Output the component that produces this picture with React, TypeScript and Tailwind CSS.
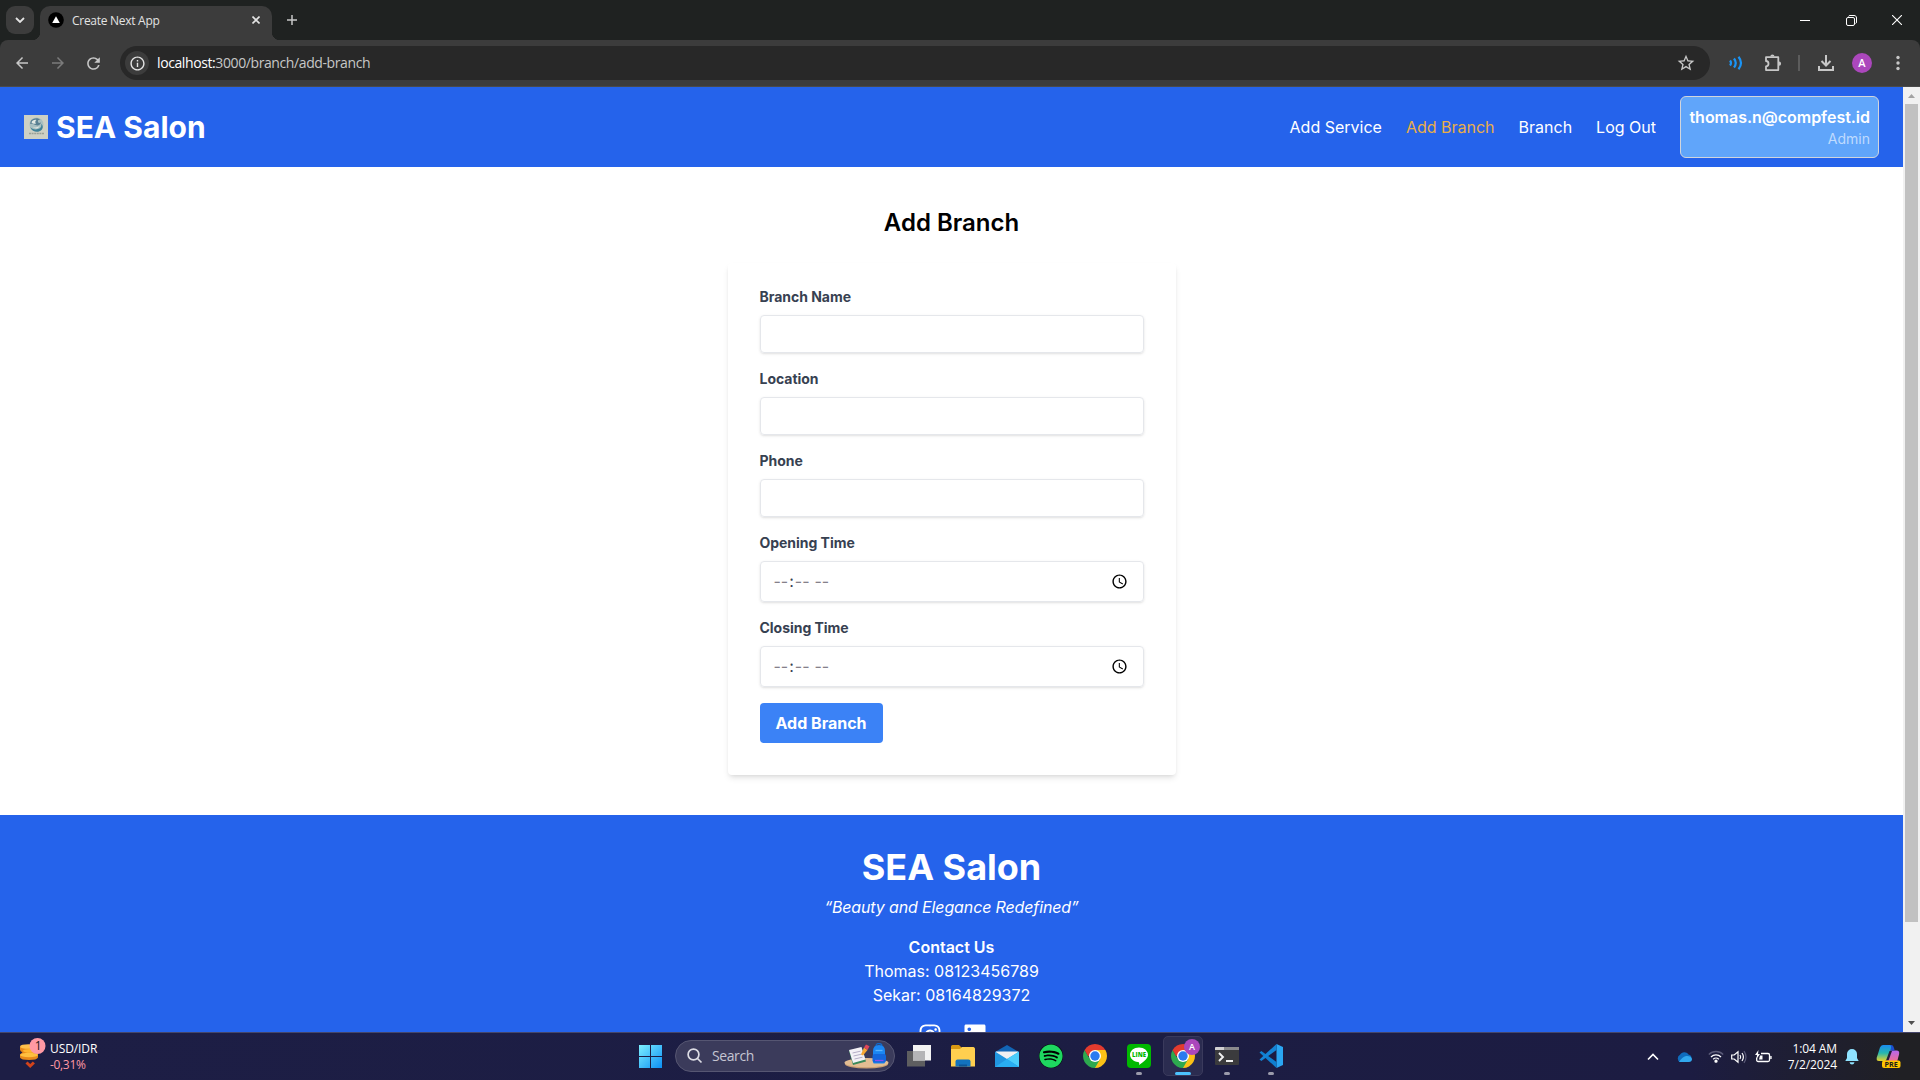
import React from "react";
import { FaInstagram, FaLinkedin, FaSpotify } from "react-icons/fa";
import { MdArrowBack, MdArrowForward, MdInfoOutline, MdRefresh, MdStarBorder } from "react-icons/md";

const UI = "font-['Open_Sans','Noto_Sans',sans-serif]";

function TabStrip() {
  return (
    <div className="flex h-10 items-start bg-[#1f2221]">
      <div className="mt-1.5 ml-1.5 flex size-7 items-center justify-center rounded-[9px] bg-[#3c3c3c]">
        <svg width="10" height="6" viewBox="0 0 10 6" fill="none" stroke="#e3e3e3" strokeWidth="1.8">
          <path d="M1 1l4 4 4-4" />
        </svg>
      </div>
      <div className="-ml-0.5 flex h-10 w-[248px] items-end">
        <div className="size-2 bg-[radial-gradient(circle_at_0_0,#1f2221_8px,#3c3c3c_8.5px)]" />
        <div className="flex h-[34px] w-[232px] items-center rounded-t-[10px] bg-[#3c3c3c] pl-2">
          <svg width="16" height="16" viewBox="0 0 16 16" className="-mt-1.5">
            <circle cx="8" cy="8" r="7.8" fill="#000" />
            <path d="M8 4.3l3.8 6.7H4.2z" fill="#fff" />
          </svg>
          <span className="-mt-1 ml-2 w-[164px] text-[12px] leading-4 tracking-[-0.28px] text-[#e3e3e3]">Create Next App</span>
          <svg width="8" height="8" viewBox="0 0 8 8" className="-mt-1.5 ml-[16px]" stroke="#e3e3e3" strokeWidth="1.6">
            <path d="M.5.5l7 7M7.5.5l-7 7" />
          </svg>
        </div>
        <div className="size-2 bg-[radial-gradient(circle_at_100%_0,#1f2221_8px,#3c3c3c_8.5px)]" />
      </div>
      <svg width="10" height="10" viewBox="0 0 10 10" className="mt-[15px] ml-[7px]" stroke="#c7c7c7" strokeWidth="1.5">
        <path d="M5 0v10M0 5h10" />
      </svg>
      <div className="ml-auto flex h-10 items-center pr-[18px]">
        <svg width="10" height="10" viewBox="0 0 10 10" stroke="#fff">
          <path d="M0 5.5h10" />
        </svg>
        <svg width="11" height="11" viewBox="0 0 11 11" className="ml-9" fill="none" stroke="#fff">
          <rect x=".5" y="2.5" width="8" height="8" rx="1.5" />
          <path d="M2.5 1.5c.2-.7.7-1 1.5-1h4c1.6 0 2.500.9 2.500 2.500v4c0 .8-.3 1.300-1 1.500" />
        </svg>
        <svg width="10" height="10" viewBox="0 0 10 10" className="ml-[35px]" stroke="#fff" strokeWidth="1.1">
          <path d="M0 0l10 10M10 0L0 10" />
        </svg>
      </div>
    </div>
  );
}

function Toolbar() {
  return (
    <div className="h-[47px] bg-[#1f2221]">
      <div className="flex h-[47px] items-center rounded-t-lg border-b border-[#4a4a4a] bg-[#3c3c3c]">
        <MdArrowBack size={18} className="ml-[13px] text-[#c7c7c7]" />
        <MdArrowForward size={18} className="ml-[18px] text-[#7b7b7b]" />
        <MdRefresh size={19} className="ml-[17px] text-[#c7c7c7]" />
        <div className="ml-[17px] flex h-[34px] w-[1590px] items-center rounded-full bg-[#282828] pr-[14px] pl-[5px]">
          <div className="flex size-6 items-center justify-center rounded-full bg-[#3c3c3c]">
            <MdInfoOutline size={17} className="text-[#e3e3e3]" />
          </div>
          <span className="-mt-px ml-2 text-[14px] tracking-[-0.4px] text-[#c7c7c7]">
            <span className="text-white">localhost:</span>3000/branch/add-branch
          </span>
          <MdStarBorder size={20} className="ml-auto text-[#c7c7c7]" />
        </div>
        <svg width="14" height="14" viewBox="0 0 14 14" className="ml-[19px]" fill="none" stroke="#1a94f5" strokeWidth="2.200">
          <path d="M1 4.500q2 2.500 0 5M5 2.500q3.500 4.500 0 9M9.500.8q5 6.200 0 12.400" />
        </svg>
        <svg width="18" height="18" viewBox="0 0 18 18" className="ml-[21px]" fill="none" stroke="#c7c7c7" strokeWidth="1.800">
          <path d="M2 3.200h12.300v12.900H2v-3.700c1.600-.1 2.500-1.200 2.500-2.700S3.600 7.100 2 7z" strokeLinejoin="round" />
          <path d="M6.300 2.500a2.100 2.100 0 0 1 4.200 0zM15 7.600a2.100 2.100 0 0 1 0 4.200z" fill="#c7c7c7" stroke="none" />
        </svg>
        <div className="ml-[16px] h-4 w-0.5 bg-[#5c5c5c]" />
        <svg width="16" height="16" viewBox="0 0 16 16" className="ml-[18px]" fill="none" stroke="#c7c7c7" strokeWidth="2">
          <path d="M8 0v10M3.500 6l4.500 4.500L12.500 6M1 11v4h14v-4" />
        </svg>
        <div className={`${UI} ml-[18px] flex size-5 items-center justify-center rounded-full bg-[#ab47bc] text-[11px] font-semibold text-white`}>A</div>
        <svg width="4" height="16" viewBox="0 0 4 16" className="ml-6" fill="#c7c7c7">
          <circle cx="2" cy="2.500" r="1.700" />
          <circle cx="2" cy="8" r="1.700" />
          <circle cx="2" cy="13.500" r="1.700" />
        </svg>
      </div>
    </div>
  );
}

function SalonLogo() {
  return (
    <svg width="24" height="24" viewBox="0 0 24 24">
      <rect width="24" height="24" fill="#cdd0c4" />
      <circle cx="12.500" cy="9.500" r="7" fill="#a9bfc1" />
      <path d="M6 12c2 2 5 3 8 2 3-.8 4-3 3-5 2 1 2.500 4 .5 6-3 3-9 2.500-11.500-3z" fill="#3f8197" />
      <path d="M7 5.500c2-2.500 7-3.500 9.500-.5-2-.5-3 .5-2.500 2 .5 1.300 2 1.300 3 .3-.3 2.700-3 3.700-5.500 2.700S8 8.500 6 9z" fill="#587f92" />
      <path d="M7.500 7.500c.5-2 3-3 5-2.500-1.500 1-1.500 2.500-.5 3.500-1.500.5-3.500.2-4.500-1zM9 12c2.500 1 5 .5 6.500-1.200C15 13.500 11.500 14.500 9 12z" fill="#e3e9e4" />
      <path d="M5 18.500h15" stroke="#9aa097" strokeWidth="1.500" strokeDasharray="2 .6" />
    </svg>
  );
}

function Header() {
  return (
    <header className="flex h-20 shrink-0 items-center bg-[#2563eb] px-6 text-white">
      <SalonLogo />
      <span className="ml-2 text-3xl font-bold">SEA Salon</span>
      <nav className="ml-auto flex items-center gap-6">
        <a>Add Service</a>
        <a className="text-[#e9ae48]">Add Branch</a>
        <a>Branch</a>
        <a>Log Out</a>
        <div className="w-[199px] rounded-md border border-gray-300 bg-[#60a5fa] p-2 text-right">
          <p className="font-semibold tracking-[-0.02px]">thomas.n@compfest.id</p>
          <p className="text-sm text-[#bfdbfe]">Admin</p>
        </div>
      </nav>
    </header>
  );
}

function Field({ label, type = "text" }: { label: string; type?: string }) {
  return (
    <div className="mb-4">
      <label className="mb-2 block text-sm font-bold tracking-[-0.03px] text-[#374151]">{label}</label>
      {type === "time" ? (
        <input
          type="time"
          className="block h-[41px] w-full appearance-none rounded border border-[#e5e7eb] px-3 py-2 leading-tight tracking-[0.1px] text-[#374151] shadow-[0_1px_3px_0_rgba(0,0,0,0.1),0_1px_2px_-1px_rgba(0,0,0,0.1)] [&::-webkit-datetime-edit-ampm-field]:text-[#85808a] [&::-webkit-datetime-edit-hour-field]:text-[#85808a] [&::-webkit-datetime-edit-minute-field]:text-[#85808a]"
        />
      ) : (
        <input
          type="text"
          className="block h-[38px] w-full appearance-none rounded border border-[#e5e7eb] px-3 py-2 leading-tight text-[#374151] shadow-[0_1px_3px_0_rgba(0,0,0,0.1),0_1px_2px_-1px_rgba(0,0,0,0.1)]"
        />
      )}
    </div>
  );
}

function Page() {
  return (
    <div className="flex h-[945px] flex-col overflow-hidden bg-white font-['Inter',sans-serif] text-base">
      <Header />
      <main className="flex h-[648px] shrink-0 flex-col items-center pt-10">
        <h1 className="mb-6 text-2xl font-semibold text-black">Add Branch</h1>
        <form className="w-full max-w-md rounded bg-white px-8 pt-6 pb-8 shadow-md">
          <Field label="Branch Name" />
          <Field label="Location" />
          <Field label="Phone" />
          <Field label="Opening Time" type="time" />
          <Field label="Closing Time" type="time" />
          <button type="button" className="block h-10 rounded bg-[#3b82f6] px-4 py-2 font-bold text-white">
            Add Branch
          </button>
        </form>
      </main>
      <footer className="flex shrink-0 flex-col items-center bg-[#2563eb] py-8 text-white">
        <h2 className="mb-2 text-4xl font-bold">SEA Salon</h2>
        <p className="tracking-[-0.13px] italic">“Beauty and Elegance Redefined”</p>
        <p className="mt-4 font-semibold">Contact Us</p>
        <p>Thomas: 08123456789</p>
        <p>Sekar: 08164829372</p>
        <div className="mt-4 ml-px flex gap-[21px]">
          <FaInstagram size={24} />
          <FaLinkedin size={24} />
        </div>
      </footer>
    </div>
  );
}

function Scrollbar() {
  return (
    <div className="flex h-[945px] w-[17px] flex-col items-center bg-[#f1f1f1]">
      <svg width="17" height="17" viewBox="0 0 17 17">
        <path d="M5 11l3.500-4 3.500 4z" fill="#a3a3a3" />
      </svg>
      <div className="h-[818px] w-[13px] bg-[#c1c1c1]" />
      <svg width="17" height="17" viewBox="0 0 17 17" className="mt-auto">
        <path d="M5 6l3.500 4L12 6z" fill="#505050" />
      </svg>
    </div>
  );
}

function ChromeIcon() {
  return (
    <svg width="24" height="24" viewBox="0 0 24 24" className="shrink-0">
      <path d="M12 12L1.610 6A12 12 0 0 1 22.390 6z" fill="#e33b2e" />
      <path d="M12 12V6h10.390A12 12 0 0 1 12 24z" fill="#fbc116" />
      <path d="M12 12l5.200 3L12 24A12 12 0 0 1 1.610 6l5.200 9z" fill="#2da94f" />
      <path d="M1.610 6L12 6v6H5z" fill="#e33b2e" />
      <circle cx="12" cy="12" r="6" fill="#fff" />
      <circle cx="12" cy="12" r="4.700" fill="#2a7bf0" />
    </svg>
  );
}

function TaskCell({ children, open }: { children: React.ReactNode; open?: boolean }) {
  return (
    <div className="flex h-[47px] w-11 flex-col items-center pt-[11px]">
      {children}
      {open && <div className="mt-1 h-[3px] w-1.5 rounded-full bg-[#9b9bab]" />}
    </div>
  );
}

function SearchArt() {
  return (
    <svg width="45" height="26" viewBox="0 0 45 26">
      <ellipse cx="22.500" cy="21" rx="21.500" ry="4.500" fill="#c99e72" />
      <ellipse cx="22.500" cy="19.700" rx="22" ry="4.600" fill="#e3bd93" />
      <path d="M5 8l13-2 4 12.500L9 22z" fill="#3a8a5b" />
      <path d="M5 7l12.500-3 4 12.500L9 20z" fill="#f3f1f6" />
      <path d="M8.500 10l8-1.800M9.500 13l8-1.800M10.500 16l8-1.800" stroke="#b5aec6" />
      <path d="M17 11.500l3-7 3.500 2.500-4.500 5.500z" fill="#f7a733" />
      <path d="M20 4.500l2-3 3.500 1.800-2 3.700z" fill="#e0465a" />
      <path d="M32 3q0-2.500 3-2.500T38 3" fill="none" stroke="#1268c9" strokeWidth="1.300" />
      <path d="M29 8q0-6 6-6t6 6v11q0 1.500-1.500 1.500h-9Q29 20.500 29 19z" fill="#1b86f2" />
      <rect x="28.500" y="11" width="13.500" height="8.500" rx="2" fill="#1466dc" />
      <path d="M31.500 7.500h7" stroke="#59b4ff" strokeWidth="1.300" />
      <path d="M31 17.500h8.500" stroke="#8a4ff0" strokeWidth="1.300" />
    </svg>
  );
}

function Taskbar() {
  return (
    <div className={`${UI} flex h-12 items-start border-t border-[#45466a] bg-[linear-gradient(90deg,#1d1e45_0%,#1c1d43_60%,#1c1c42_88%,#202024_99%)] text-[12px] leading-4 text-white`}>
      <div className="flex w-[639px] pt-[5px] pl-[19px]">
        <svg width="27" height="31" viewBox="0 0 27 31">
          <path d="M1 9v2.500q0 2 2.500 2.800L1 16.500v3q1 2.500 9 2.500t9-2.500v-3.500L17.500 14V9z" fill="#e8891a" />
          <ellipse cx="9.500" cy="8.500" rx="8.500" ry="2.300" fill="#ffc04a" />
          <ellipse cx="11" cy="12.800" rx="7" ry="1.900" fill="#ffb52f" />
          <ellipse cx="10" cy="17" rx="9" ry="2.200" fill="#ffbf3f" />
          <path d="M7.500 24.500l3.700 3.500 3.700-3.500" fill="none" stroke="#d2431a" strokeWidth="3" />
          <circle cx="18.500" cy="8" r="8" fill="#ff99a4" />
          <text x="19.300" y="12.200" textAnchor="middle" fontSize="12" fill="#1a1a1a">1</text>
        </svg>
        <div className="mt-[3px] ml-1">
          <div className="tracking-[-0.1px]">USD/IDR</div>
          <div className="tracking-[-0.32px] text-[#ff99a4]">-0,31%</div>
        </div>
      </div>
      <svg width="23" height="23" viewBox="0 0 23 23" className="mt-3">
        <defs>
          <linearGradient id="win" x1="0" y1="0" x2="1" y2="1">
            <stop offset="0" stopColor="#7df0ff" />
            <stop offset="1" stopColor="#0c8ff5" />
          </linearGradient>
        </defs>
        <path d="M0 0h11v11H0zM12 0h11v11H12zM0 12h11v11H0zM12 12h11v11H12z" fill="url(#win)" />
      </svg>
      <div className="mt-[7px] ml-[13px] flex h-8 w-[220px] items-center rounded-full border border-[#565672] bg-[#3b3b5b] pl-[11px]">
        <svg width="16" height="16" viewBox="0 0 16 16" fill="none" stroke="#dcdce4" strokeWidth="1.700">
          <circle cx="6.500" cy="6.500" r="5.400" />
          <path d="M10.500 10.500l4 4" />
        </svg>
        <span className="ml-[9px] w-[132px] text-[14px] tracking-[-0.4px] text-[#c5c5d2]">Search</span>
        <SearchArt />
      </div>
      <div className="ml-0.5 flex">
        <TaskCell>
          <svg width="24" height="24" viewBox="0 0 24 24">
            <rect x="0" y="7" width="18" height="15.500" fill="#5e5e60" />
            <rect x="6" y="1" width="18" height="15.500" fill="#f2f2f2" />
            <rect x="6" y="7" width="12" height="9.500" fill="#b4b4b6" />
          </svg>
        </TaskCell>
        <TaskCell>
          <svg width="24" height="24" viewBox="0 0 24 24">
            <path d="M0 2.500Q0 1 1.500 1H8l3 3h11.500Q24 4 24 5.500V12H0z" fill="#d99812" />
            <path d="M0 5h9l2-2h11.500Q24 3.500 24 5v17.500H0z" fill="#ffcf4f" />
            <path d="M4.500 22.500v-5q0-2 2-2h11q2 0 2 2v5z" fill="#1272bd" />
            <path d="M8 22.500v-2h8v2z" fill="#0c5494" />
          </svg>
        </TaskCell>
        <TaskCell>
          <svg width="24" height="24" viewBox="0 0 24 24">
            <path d="M0 8l12-7 12 7v6H0z" fill="#1265b5" />
            <path d="M1 7.500h22v6l-11 4-11-4z" fill="#f0f0f2" />
            <path d="M0 7.500l12 7.500 12-7.500v15.500H0z" fill="#2196e0" />
            <path d="M24 7.500V23L11 14.400l1 .6z" fill="#4bcdfb" />
            <path d="M0 23l12-8 12 8z" fill="#29aef2" />
          </svg>
        </TaskCell>
        <TaskCell>
          <div className="flex size-6 items-center justify-center rounded-full bg-black">
            <FaSpotify size={24} className="text-[#1ed760]" />
          </div>
        </TaskCell>
        <TaskCell>
          <ChromeIcon />
        </TaskCell>
        <TaskCell open>
          <svg width="24" height="24" viewBox="0 0 24 24">
            <rect width="24" height="24" rx="4" fill="#00b900" />
            <path d="M12 3.500c5 0 9 3.200 9 7.200 0 3.600-4 6.800-9 10.300.6-2 .3-2.900-1-3.100-4.600-.5-8-3.500-8-7.200 0-4 4-7.200 9-7.200z" fill="#fff" />
            <text x="12" y="13.200" textAnchor="middle" fontSize="6" fontWeight="800" fill="#00b900">LINE</text>
          </svg>
        </TaskCell>
        <div className="flex h-[47px] w-11 justify-center pt-[3px]">
          <div className="relative flex h-10 w-10 flex-col items-center rounded-[5px] border border-[#3a3a5c] bg-[#2b2c50] pt-[7px]">
            <ChromeIcon />
            <div className="mt-1 h-[3px] w-4 shrink-0 rounded-full bg-[#4cc2ff]" />
            <div className="absolute top-[2px] left-[20px] flex size-4 items-center justify-center rounded-full bg-[#ab47bc] text-[9px] font-semibold">A</div>
          </div>
        </div>
        <TaskCell open>
          <svg width="24" height="24" viewBox="0 0 24 24">
            <rect y="3" width="24" height="18" rx="1" fill="#3b3b3d" />
            <path d="M0 6V4q0-1 1-1h22q1 0 1 1v2z" fill="#d0d0d2" />
            <path d="M9 3h15v3H9z" fill="#8a8a8d" />
            <path d="M4 9l4 4-4 4M11 17h7" fill="none" stroke="#f0f0f0" strokeWidth="1.900" />
          </svg>
        </TaskCell>
        <TaskCell open>
          <svg width="24" height="24" viewBox="0 0 24 24">
            <path d="M17.500 0L24 3v18l-6.500 3z" fill="#2aa6f2" />
            <path d="M.5 8.500L2.300 7l15.200 11v6z" fill="#0f7fcf" />
            <path d="M.5 15.500L2.300 17 17.500 6V0z" fill="#1484d6" />
          </svg>
        </TaskCell>
      </div>
      <div className="ml-auto flex h-[47px] items-center pr-[19px]">
        <svg width="12" height="8" viewBox="0 0 12 8" fill="none" stroke="#fff" strokeWidth="1.600">
          <path d="M1 6.500l5-5 5 5" />
        </svg>
        <svg width="16" height="11" viewBox="0 0 16 11" className="ml-[17px]">
          <path d="M4 11a4 4 0 0 1 0-7.200A5 5 0 0 1 12.500 3.500 3.800 3.800 0 0 1 12 11z" fill="#0f6cbd" />
          <path d="M3 11q3-5 7-6 5-.5 6 3 0 3-3.500 3z" fill="#31a8ee" />
        </svg>
        <svg width="16" height="13" viewBox="0 0 16 13" className="ml-4" fill="none" stroke="#fff" strokeWidth="1.300">
          <path d="M.8 4.500a10.200 10.200 0 0 1 14.400 0" stroke="#5b5b78" />
          <path d="M3 7a7 7 0 0 1 10 0M5.200 9.200a4 4 0 0 1 5.600 0" />
          <circle cx="8" cy="11.200" r="1" fill="#fff" />
        </svg>
        <svg width="16" height="14" viewBox="0 0 16 14" className="ml-[7px]" fill="none" stroke="#fff" strokeWidth="1.200">
          <path d="M.7 5v4h2.500L7 12.300V1.700L3.200 5zM9 5q1.400 2 0 4M11 3q2.800 4 0 8" />
          <path d="M13 1.200q4 5.800 0 11.600" stroke="#5b5b78" />
        </svg>
        <svg width="17" height="14" viewBox="0 0 17 14" className="ml-2" fill="none" stroke="#fff" strokeWidth="1.300">
          <path d="M6 3.500h7q1.500 0 1.500 1.500v5q0 1.500-1.500 1.500H3.200Q1.700 11.500 1.700 10V7.500M16 6v3" />
          <path d="M4 9.500h3.500v-4H5z" fill="#fff" stroke="none" />
          <path d="M3.500 0L0 5h2L1.500 9 5 4H3z" fill="#fff" stroke="none" />
        </svg>
        <div className="ml-[15px] w-[50px] text-right tracking-[-0.1px] whitespace-nowrap">
          <div className="-ml-4">1:04 AM</div>
          <div className="-ml-4">7/2/2024</div>
        </div>
        <svg width="14" height="16" viewBox="0 0 14 16" className="ml-2" fill="#8fe3ff">
          <path d="M7 0a5 5 0 0 1 5 5v4l1.700 3H.3L2 9V5a5 5 0 0 1 5-5zM4.500 13.300h5Q9 15.500 7 15.500t-2.500-2.200z" />
        </svg>
        <svg width="25" height="26" viewBox="0 0 25 26" className="ml-[17px]">
          <defs>
            <linearGradient id="cpl" x1="0" y1="0" x2="0" y2="1">
              <stop offset="0" stopColor="#1a8cf0" />
              <stop offset=".5" stopColor="#25b7b0" />
              <stop offset="1" stopColor="#e8d22a" />
            </linearGradient>
            <linearGradient id="cpr" x1="0" y1="0" x2="0" y2="1">
              <stop offset="0" stopColor="#b667f0" />
              <stop offset="1" stopColor="#ff6f78" />
            </linearGradient>
          </defs>
          <path d="M13 6.500h7.500q3.500 0 2.500 4l-2 7.500q-1 2-4 2H9.500z" fill="url(#cpr)" />
          <path d="M13 1h2.500q1.800 0 2.500 3l.7 2.500h-4.500z" fill="#1b4fd0" />
          <path d="M7 1h7q1.500.5 1 3L11.500 15q-.8 2-3 2H3Q0 17 .8 13.500L4 3.500Q4.800 1 7 1z" fill="url(#cpl)" />
          <path d="M13.500 7h2.500l-3.500 9.500H10z" fill="#202036" />
          <rect x="6" y="16.500" width="18.500" height="7.500" rx="2" fill="#ffc400" />
          <text x="15.200" y="22.900" textAnchor="middle" fontSize="7.200" fontWeight="700" fill="#1a1a1a">PRE</text>
        </svg>
      </div>
    </div>
  );
}

export default function App() {
  return (
    <div className="flex h-[1080px] w-[1920px] flex-col overflow-hidden">
      <div className={UI}>
        <TabStrip />
        <Toolbar />
      </div>
      <div className="flex">
        <div className="w-[1903px]">
          <Page />
        </div>
        <Scrollbar />
      </div>
      <Taskbar />
    </div>
  );
}
